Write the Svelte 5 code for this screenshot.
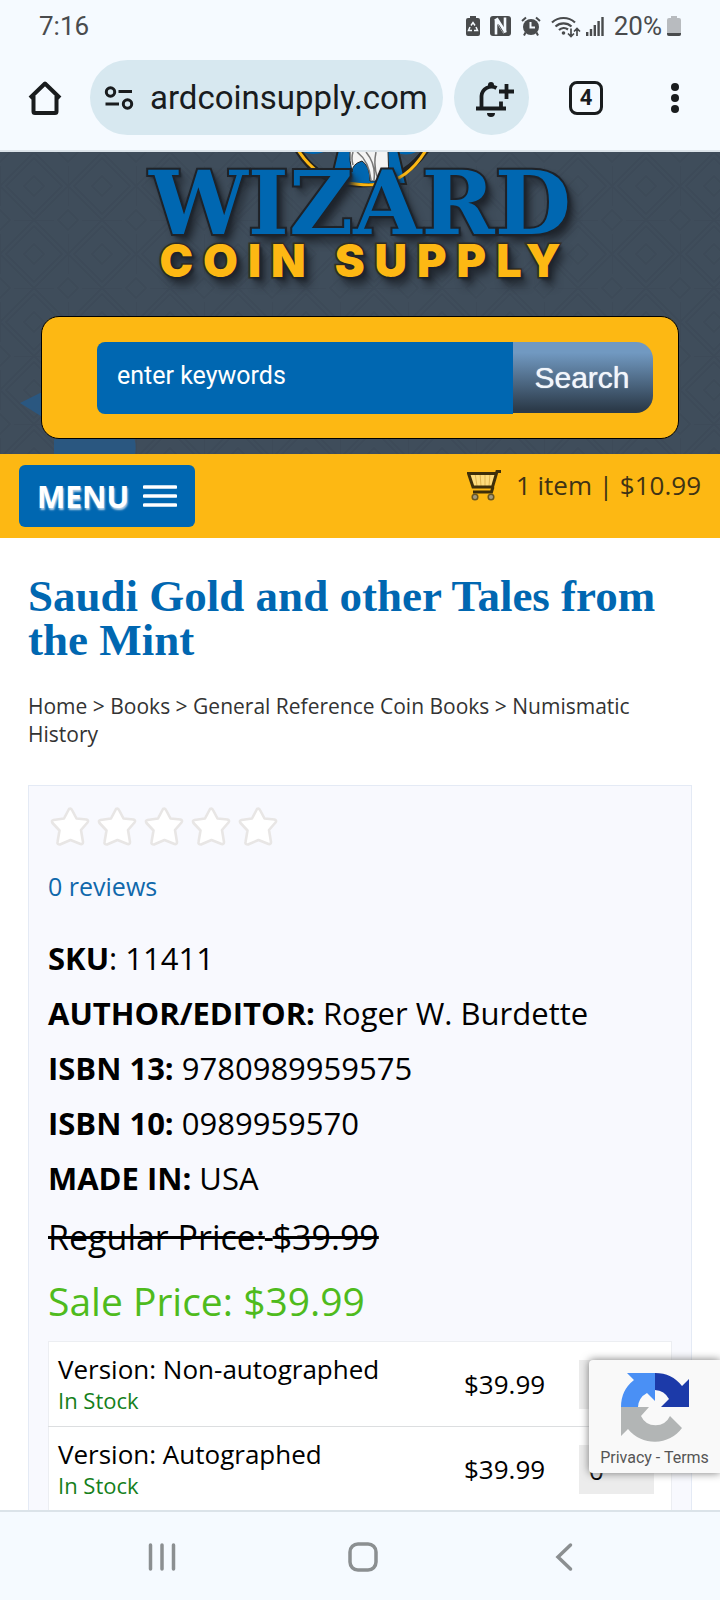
<script>
  const details = [
    { label: 'SKU', colon: ': ', value: '11411' },
    { label: 'AUTHOR/EDITOR:', colon: ' ', value: 'Roger W. Burdette' },
    { label: 'ISBN 13:', colon: ' ', value: '9780989959575' },
    { label: 'ISBN 10:', colon: ' ', value: '0989959570' },
    { label: 'MADE IN:', colon: ' ', value: 'USA' }
  ];
  const versions = [
    { id: 'plain', name: 'Version: Non-autographed', stock: 'In Stock', price: '$39.99' },
    { id: 'signed', name: 'Version: Autographed', stock: 'In Stock', price: '$39.99' }
  ];
  const crumbs = ['Home', 'Books', 'General Reference Coin Books'];
</script>

<div class="screen">
  <div class="status">
    <span class="clock">7:16</span>
    <div class="indicators">
      <svg width="14" height="20" viewBox="0 0 14 20" class="recycle" aria-hidden="true">
        <path d="M4 0h6v2h2a2 2 0 0 1 2 2v14a2 2 0 0 1-2 2H2a2 2 0 0 1-2-2V4a2 2 0 0 1 2-2h2z" fill="#494b4d" />
        <path d="M5 9.500l2-3 2 3M10 11l1.500 3.500H8M6 14.500H2.500L4 11" fill="none" stroke="#f5faff" stroke-width="1.500" />
      </svg>
      <svg width="21" height="20" viewBox="0 0 21 20" class="nfc" aria-hidden="true">
        <rect width="21" height="20" rx="3" fill="#494b4d" />
        <path d="M6 18.500V3.500M15 16.500V1.500" fill="none" stroke="#f5faff" stroke-width="2.600" />
        <path d="M6 2.500l9 14" stroke="#f5faff" stroke-width="4" />
        <path d="M8.500 8.500l5 8" stroke="#494b4d" stroke-width="1" />
      </svg>
      <svg width="20" height="20" viewBox="0 0 20 20" class="alarm" aria-hidden="true">
        <circle cx="10" cy="11" r="8" fill="#494b4d" />
        <path d="M1 5L5 1.500M19 5l-4-3.500M4.500 16.500L3 19.500M15.500 16.500l1.500 3" stroke="#494b4d" stroke-width="2" />
        <path d="M9.500 6v5.500H14" fill="none" stroke="#f5faff" stroke-width="2" />
      </svg>
      <svg width="30" height="23" viewBox="0 0 30 23" class="wifi" aria-hidden="true">
        <path d="M1 7.500a17 17 0 0 1 23 0M4.500 11.500a12 12 0 0 1 16 0M8 15a7 7 0 0 1 9-.5" fill="none" stroke="#494b4d" stroke-width="2.200" />
        <circle cx="12.500" cy="18" r="1.800" fill="#494b4d" />
        <path d="M20 13.500v8M17 18.500l3 3 3-3M26 21v-7M23 16.500l3-3 3 3" fill="none" stroke="#494b4d" stroke-width="1.700" />
      </svg>
      <svg width="18" height="20" viewBox="0 0 18 20" class="signal" aria-hidden="true">
        <path d="M1.200 16v4M5 13v7M8.800 9v11M12.600 5v15M16.500 1v19" stroke="#494b4d" stroke-width="2.400" />
      </svg>
      <span class="percent">20%</span>
      <svg width="14" height="20" viewBox="0 0 14 20" aria-hidden="true">
        <path d="M4 0h6v2h2a2 2 0 0 1 2 2v14a2 2 0 0 1-2 2H2a2 2 0 0 1-2-2V4a2 2 0 0 1 2-2h2z" fill="#b8bbbf" />
        <path d="M0 17h14v1a2 2 0 0 1-2 2H2a2 2 0 0 1-2-2z" fill="#494b4d" />
      </svg>
    </div>
  </div>

  <div class="toolbar">
    <button class="bare home" aria-label="Home">
      <svg width="34" height="34" viewBox="0 0 34 34" aria-hidden="true">
        <path d="M2 17L17 2.500 32 17M5.500 15v15.500a1.500 1.500 0 0 0 1.500 1.500h20a1.500 1.500 0 0 0 1.500-1.500V15" fill="none" stroke="#191c1e" stroke-width="4" stroke-linejoin="round" />
      </svg>
    </button>
    <button class="address" aria-label="Address">
      <svg width="30" height="24" viewBox="0 0 30 24" aria-hidden="true">
        <g fill="none" stroke="#191c1e" stroke-width="3">
          <circle cx="6.500" cy="6" r="4.200" />
          <circle cx="23.500" cy="18" r="4.200" />
          <path d="M14.500 5.500H28M1.500 18H15" />
        </g>
      </svg>
      <span>ardcoinsupply.com</span>
    </button>
    <button class="bell" aria-label="Add notification">
      <svg width="38" height="38" viewBox="0 0 38 38" aria-hidden="true">
        <path d="M0 29.500h30M5.500 29V17a10 10 0 0 1 15-8M25 22.500V29M23 12.500h15M30.500 5v15" fill="none" stroke="#191c1e" stroke-width="3.800" />
        <path d="M12 6a3 3 0 1 1 6 0v2h-6zM11 34h8a4 4 0 0 1-8 0z" fill="#191c1e" />
      </svg>
    </button>
    <button class="bare tabs">4</button>
    <button class="bare more" aria-label="More options">
      <svg width="8" height="32" viewBox="0 0 8 32" aria-hidden="true">
        <g fill="#191c1e"><circle cx="4" cy="5" r="4" /><circle cx="4" cy="16" r="4" /><circle cx="4" cy="27" r="4" /></g>
      </svg>
    </button>
  </div>

  <main class="page">
    <header class="masthead">
      <svg class="weave" width="100%" height="100%" aria-hidden="true">
        <defs>
          <pattern id="weave" width="68" height="68" patternUnits="userSpaceOnUse">
            <g fill="none" stroke="#384654" stroke-width="2" opacity="0.45">
              <path d="M0 34L34 0l34 34-34 34zM6 34L34 6l28 28-28 28zM24 34l10-10 10 10-10 10z" />
              <path d="M-10 0L0-10 10 0 0 10zM58 0L68-10 78 0 68 10zM-10 68L0 58l10 10L0 78zM58 68l10-10 10 10-10 10zM0 14v40M14 0h40" />
            </g>
          </pattern>
        </defs>
        <rect width="100%" height="100%" fill="#3f4d5b" />
        <rect width="100%" height="100%" fill="url(#weave)" />
        <path d="M20 251l24-12v27zM54 302v-20h79q4 10 2 20z" fill="#2a5780" />
      </svg>

      <div class="logo">
        <svg class="wizard" width="140" height="40" viewBox="0 0 140 40" aria-hidden="true">
          <path d="M8-2Q28 32 70 32T136-2" fill="none" stroke="#222" stroke-width="7" />
          <path d="M10-1h26q-12 6-26 0zM104-1h24q-12 7-24 0z" fill="#0067b1" />
          <path d="M48-2h60l8 34H40z" fill="#0067b1" stroke="#222" stroke-width="2" />
          <path d="M60-2h38q1 18 0 31H80Q80 14 72 9 62 12 62 20 59 8 60-2z" fill="#f4f4f4" stroke="#222" />
          <path d="M67 0q12 9 14 28M76 0q10 12 8 28M86 0q-3 15 2 27M63 0q-2 6 0 13" fill="none" stroke="#777" stroke-width="1.500" />
          <path d="M8-2Q26 26 54 30.500T92 31Q118 28 136-2" fill="none" stroke="#fdb813" stroke-width="3" />
        </svg>
        <div class="wordmark">WIZARD</div>
        <div class="tagline">COIN SUPPLY</div>
      </div>

      <form class="search" onsubmit={(e) => e.preventDefault()}>
        <input type="text" aria-label="Search keywords" placeholder="enter keywords" />
        <button type="submit">Search</button>
      </form>
    </header>

    <nav class="bar">
      <button class="menu">
        <span>MENU</span>
        <svg width="34" height="23" viewBox="0 0 34 23" aria-hidden="true">
          <path d="M1.500 2h31M1.500 11h31M1.500 20h31" stroke="#fff" stroke-width="3.600" stroke-linecap="round" />
        </svg>
      </button>
      <a class="cart" href="#cart">
        <svg width="34" height="32" viewBox="0 0 34 32" aria-hidden="true">
          <path d="M2 4h28l-4 13H6z" fill="#ffdc7c" />
          <path d="M8 4l2 13M13 4l1 13M18 4v13M23 4l-1 13" stroke="#e0b550" stroke-width="1" />
          <path d="M34 2.500h-4L25.500 18H6L1.500 4.500H29M26 18l-1.500 5H6" fill="none" stroke="#3f2f09" stroke-width="3" />
          <circle cx="8" cy="28" r="2.800" fill="#a39a80" stroke="#6b5722" stroke-width="1.500" />
          <circle cx="24" cy="28" r="2.800" fill="#a39a80" stroke="#6b5722" stroke-width="1.500" />
        </svg>
        <span>1 item | $10.99</span>
      </a>
    </nav>

    <div class="content">
      <h1>Saudi Gold and other Tales from the Mint</h1>
      <p class="crumbs">
        {#each crumbs as crumb}<a href="#crumb">{crumb}</a><span>{' > '}</span>{/each}<a href="#crumb">Numismatic History</a>
      </p>

      <section class="product">
        <div class="stars" role="img" aria-label="No rating">
          {#each [1, 2, 3, 4, 5] as star (star)}
            <svg width="42" height="42" viewBox="0 0 42 42" aria-hidden="true">
              <path d="M20 3q2-1 3 1l4.500 8.500 10 1q2.500 1 1 3L32 24l2 12q0 2.500-2.500 2L21.500 34 11 38.500q-3 0-2.500-2.500l2-11.500L3.500 17q-1.500-2.500 1-3l10.500-1.500z" fill="#fff" stroke="#e8e6e5" stroke-width="2.600" stroke-linejoin="round" />
            </svg>
          {/each}
        </div>
        <a class="reviews" href="#reviews">0 reviews</a>
        <ul class="details">
          {#each details as item (item.label)}
            <li><strong>{item.label}</strong>{item.colon}{item.value}</li>
          {/each}
        </ul>
        <p class="regular"><s>Regular Price:</s><s class="gap">&nbsp;</s><s>$39.99</s></p>
        <p class="sale">Sale Price: $39.99</p>
        <table>
          <tbody>
            {#each versions as version (version.id)}
              <tr>
                <td class="name">
                  <label for={version.id}>{version.name}</label>
                  <div class="stock">{version.stock}</div>
                </td>
                <td class="price">{version.price}</td>
                <td class="qty"><input id={version.id} type="text" value="0" /></td>
              </tr>
            {/each}
          </tbody>
        </table>
      </section>
    </div>

    <aside class="captcha">
      <svg width="70" height="70" viewBox="0 0 70 70" aria-hidden="true">
        <path d="M35 1a34 34 0 0 1 27 13l7-7v28H41l8-8a17 17 0 0 0-14-9z" fill="#1c3aa9" />
        <path d="M35 1v28l-8-8a17 17 0 0 0-9 14H1A34 34 0 0 1 14 8L7 1z" fill="#4a90f5" />
        <path d="M1 35h28l-8 9a16 16 0 0 0 29 0l12 12A34 34 0 0 1 8 57l-7 7z" fill="#b2b5b5" />
      </svg>
      <p><a href="#privacy">Privacy</a> - <a href="#terms">Terms</a></p>
    </aside>
  </main>

  <nav class="system">
    <button class="bare" aria-label="Recent apps">
      <svg width="30" height="30" viewBox="0 0 30 30" aria-hidden="true">
        <path d="M3.500 3v24M15 3v24M26.500 3v24" stroke="#8b8f91" stroke-width="3.500" stroke-linecap="round" />
      </svg>
    </button>
    <button class="bare" aria-label="Home screen">
      <svg width="30" height="30" viewBox="0 0 30 30" aria-hidden="true">
        <rect x="2" y="2" width="26" height="26" rx="8" fill="none" stroke="#8b8f91" stroke-width="3.500" />
      </svg>
    </button>
    <button class="bare" aria-label="Back">
      <svg width="30" height="30" viewBox="0 0 30 30" aria-hidden="true">
        <path d="M21.500 3L9 15l12.500 12" fill="none" stroke="#8b8f91" stroke-width="3.500" stroke-linecap="round" />
      </svg>
    </button>
  </nav>
</div>

<style>
  :global(body) {
    margin: 0;
  }
  .screen {
    display: flex;
    flex-direction: column;
    height: 100vh;
    background: #fff;
    color: #000;
    font-family: "Open Sans", sans-serif;
  }
  .screen :is(button, input) {
    font-family: inherit;
    border: 0;
    padding: 0;
    margin: 0;
  }
  .screen :is(h1, p, ul) {
    margin: 0;
    padding: 0;
  }
  svg {
    display: block;
    flex: none;
  }
  a {
    color: inherit;
    text-decoration: none;
  }
  .bare {
    background: none;
  }

  .status {
    display: flex;
    justify-content: space-between;
    align-items: center;
    height: 52px;
    padding: 0 39px;
    background: #f5faff;
    color: #494b4d;
    font: 26px Roboto, sans-serif;
  }
  .indicators {
    display: flex;
    align-items: center;
  }
  .recycle,
  .nfc,
  .alarm {
    margin-right: 10px;
  }
  .wifi {
    margin-right: 5px;
  }
  .signal {
    margin-right: 10px;
  }
  .percent {
    margin-right: 5px;
  }

  .toolbar {
    display: flex;
    align-items: center;
    padding: 8px 41px 15px 28px;
    background: #f5faff;
    border-bottom: 2px solid #dbe3e9;
  }
  .address {
    flex: 1;
    display: flex;
    align-items: center;
    gap: 16px;
    height: 75px;
    margin: 0 11px 0 28px !important;
    padding: 0 14px !important;
    overflow: hidden;
    border-radius: 38px;
    background: #d7e8f0;
    color: #191c1e;
    font: 33px Roboto, sans-serif !important;
    white-space: nowrap;
  }
  .bell {
    display: flex;
    align-items: center;
    justify-content: center;
    width: 75px;
    height: 75px;
    padding-left: 6px !important;
    border-radius: 50%;
    background: #d7e8f0;
  }
  .tabs {
    width: 34px;
    height: 34px;
    margin: 0 68px 0 40px !important;
    border: 3px solid #191c1e !important;
    border-radius: 8px;
    color: #191c1e;
    font: bold 22px/28px Roboto, sans-serif !important;
  }

  .page {
    position: relative;
    flex: 1;
    min-height: 0;
    overflow: hidden;
  }
  .masthead {
    position: relative;
    padding-bottom: 15px;
    overflow: hidden;
  }
  .weave {
    position: absolute;
    inset: 0;
  }
  .logo {
    position: relative;
    height: 164px;
    text-align: center;
  }
  .wizard {
    position: absolute;
    top: 0;
    left: 50%;
    margin-left: -70px;
  }
  .wordmark,
  .tagline {
    position: relative;
    text-shadow:
      0 0 3px #1c2026,
      3px 3px 3px #20262e,
      6px 8px 8px #20262e;
    paint-order: stroke fill;
  }
  .wordmark {
    padding-top: 8px;
    color: #0067b1;
    font: bold 88px/86px "DejaVu Serif", serif;
    -webkit-text-stroke: 4px #22252a;
  }
  .tagline {
    padding-left: 10px;
    color: #fdb813;
    font: 900 45px/30px Inter, sans-serif;
    letter-spacing: 10px;
    -webkit-text-stroke: 3px #3a3426;
  }
  .search {
    position: relative;
    display: flex;
    align-items: flex-start;
    margin: 0 41px;
    padding: 25px 25px 24px 55px;
    border: 1px solid #000;
    border-radius: 18px;
    background: #fdb813;
  }
  .search input {
    flex: 1;
    min-width: 0;
    height: 72px;
    padding: 0 20px 6px;
    box-sizing: border-box;
    border-radius: 8px 0 0 8px;
    background: #0067b1;
    font: 25px Roboto, sans-serif;
  }
  .search input::placeholder {
    color: #fff;
    opacity: 1;
  }
  .search button {
    width: 140px;
    height: 71px;
    padding-right: 2px;
    border-radius: 0 17px 17px 0;
    background: linear-gradient(#7199c1 15%, #2c3b4a 95%);
    color: #f2f6fb;
    font: 30px "Liberation Sans", sans-serif;
    text-shadow: 0 0 1px #f2f6fb;
  }

  .bar {
    display: flex;
    justify-content: space-between;
    align-items: flex-start;
    height: 73px;
    padding: 11px 19px 0;
    background: #fdb813;
  }
  .menu {
    display: flex;
    align-items: center;
    gap: 14px;
    height: 62px;
    padding: 0 18px !important;
    border-radius: 6px;
    background: #0067b1;
    color: #fff;
    font-size: 30px;
    font-weight: 700;
    text-shadow: 1px 2px 2px #b9d3e8;
  }
  .cart {
    display: flex;
    align-items: center;
    gap: 15px;
    margin-top: 3px;
    color: #3f3315;
    font-size: 26px;
    line-height: 34px;
  }

  .content {
    padding: 36px 28px 0;
  }
  h1 {
    color: #0067b1;
    font: bold 45px/44px "Liberation Serif", serif;
  }
  .crumbs {
    padding: 30px 0 37px !important;
    color: #333;
    font-size: 21px;
    line-height: 28px;
  }
  .product {
    padding: 20px 19px;
    border: 1px solid #e4eaf5;
    background: #f8f9fe;
  }
  .stars {
    display: flex;
    gap: 5px;
    margin-left: 1px;
  }
  .reviews {
    display: block;
    margin: 20px 0 27px;
    color: #1068ab;
    font-size: 25px;
    line-height: 36px;
  }
  .details {
    list-style: none;
    font-size: 31px;
    line-height: 55px;
  }
  .regular {
    font-size: 34px;
    line-height: 62px;
  }
  .gap {
    font-size: 30px;
  }
  .sale {
    margin-bottom: 9px !important;
    color: #4fbb1d;
    font-size: 39px;
    line-height: 62px;
  }
  table {
    width: 100%;
    border-collapse: collapse;
    background: #fff;
    border: 1px solid #eceef2;
  }
  tr {
    border-bottom: 1px solid #dcdee0;
  }
  td {
    height: 84px;
    padding: 0;
    font-size: 26px;
  }
  .name {
    padding: 0 0 2px 9px;
    height: 82px;
    line-height: 34px;
  }
  .stock {
    color: #15801b;
    font-size: 22px;
    line-height: 28px;
  }
  .price {
    width: 115px;
  }
  .qty {
    width: 92px;
  }
  .qty input {
    display: block;
    width: 75px;
    height: 49px;
    padding: 1px 0 0 10px;
    box-sizing: border-box;
    background: #ececec;
    font-size: 26px;
  }

  .captcha {
    position: absolute;
    right: 0;
    bottom: 37px;
    display: flex;
    flex-direction: column;
    align-items: center;
    gap: 7px;
    width: 131px;
    padding: 12px 0 6px;
    border-radius: 4px 0 0 4px;
    background: #f9f9f9;
    box-shadow: 0 0 8px #777;
    color: #555;
    font: 16px/18px Roboto, sans-serif;
  }

  .system {
    display: flex;
    justify-content: space-around;
    align-items: center;
    height: 86px;
    padding: 2px 56px 0 61px;
    border-top: 2px solid #dbe3e9;
    background: #f5faff;
  }
</style>
